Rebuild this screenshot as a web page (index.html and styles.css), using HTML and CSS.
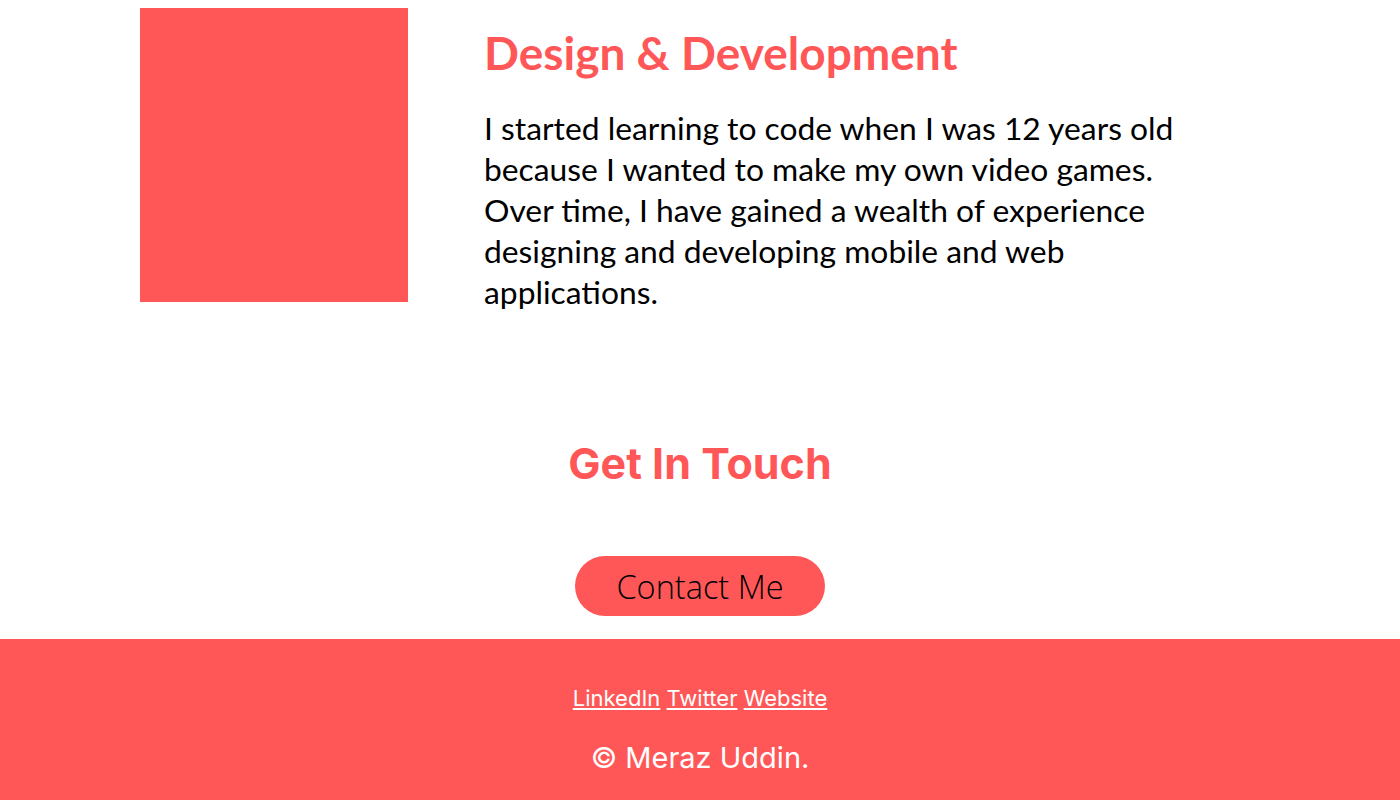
FILE: index.html
```html
<!DOCTYPE html>
<html lang="en">
<head>
<meta charset="utf-8">
<title>Meraz Uddin</title>
<link rel="stylesheet" href="styles.css">
</head>
<body>
<section class="about">
  <div class="about-image"></div>
  <div class="about-text">
    <h2 class="about-title">Design &amp; Development</h2>
    <p class="about-body">I started learning to code when I was 12 years old because I wanted to make my own video games. Over time, I have gained a wealth of experience designing and developing mobile and web applications.</p>
  </div>
</section>
<section class="contact">
  <h2 class="contact-title">Get In Touch</h2>
  <a class="contact-button" href="#">Contact Me</a>
</section>
<footer class="footer">
  <div class="footer-links">
    <a href="#">LinkedIn</a> <a href="#">Twitter</a> <a href="#">Website</a>
  </div>
  <p class="footer-copy">© Meraz Uddin.</p>
</footer>
</body>
</html>
```

FILE: styles.css
```css
* { box-sizing: border-box; }
html, body { margin: 0; padding: 0; background: #fff; }
body { font-family: "Lato", "Open Sans", sans-serif; color: #000; }

.about {
  display: flex;
  align-items: flex-start;
  padding: 8px 0 0 140px;
  gap: 76px;
}
.about-image {
  width: 268px;
  height: 294px;
  background: #ff5757;
  flex: none;
}
.about-text { width: 712px; }
.about-title {
  margin: 20px 0 0;
  font-family: "Lato", sans-serif;
  font-weight: 700;
  font-size: 46px;
  line-height: 50px;
  color: #ff5757;
}
.about-body {
  margin: 30px 0 0;
  font-family: "Lato", sans-serif;
  font-size: 31.8px;
  line-height: 41px;
}

.contact {
  display: flex;
  flex-direction: column;
  align-items: center;
  padding-top: 125px;
  padding-bottom: 23px;
}
.contact-title {
  margin: 0;
  font-family: "Inter", sans-serif;
  font-weight: 700;
  font-size: 43px;
  line-height: 50px;
  color: #ff5757;
}
.contact-button {
  margin-top: 68px;
  width: 250px;
  height: 60px;
  border-radius: 30px;
  background: #ff5757;
  color: #000;
  text-decoration: none;
  font-family: "Open Sans", sans-serif;
  font-weight: 300;
  font-size: 32.5px;
  display: flex;
  align-items: center;
  justify-content: center;
}

.footer {
  background: #ff5757;
  text-align: center;
  padding: 44px 0 30px;
  color: #fff;
  font-family: "Inter", sans-serif;
}
.footer-links { font-size: 22px; line-height: 30px; }
.footer-links a { color: #fff; }
.footer-copy { margin: 27px 0 0; font-size: 29px; line-height: 36px; }
```
